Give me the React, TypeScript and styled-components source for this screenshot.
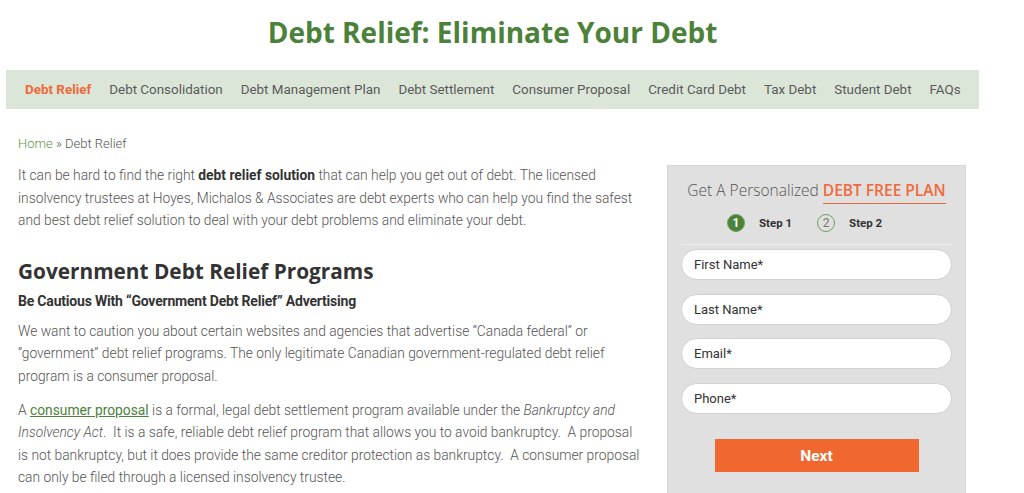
import styled, { createGlobalStyle } from 'styled-components';

const GlobalStyle = createGlobalStyle`
  body {
    margin: 0;
    background: #fff;
    font-family: Roboto, "Liberation Sans", sans-serif;
  }
`;

const navItems = [
  'Debt Relief',
  'Debt Consolidation',
  'Debt Management Plan',
  'Debt Settlement',
  'Consumer Proposal',
  'Credit Card Debt',
  'Tax Debt',
  'Student Debt',
  'FAQs',
];

const fields = ['First Name*', 'Last Name*', 'Email*', 'Phone*'];

const App = () => {
  return (
    <Page>
      <GlobalStyle />
      <Title>Debt Relief: Eliminate Your Debt</Title>
      <Nav>
        {navItems.map((item, i) => (
          <NavItem key={item} $active={i === 0}>{item}</NavItem>
        ))}
      </Nav>
      <Main>
        <Content>
          <Crumbs>
            <a>Home</a> » Debt Relief
          </Crumbs>
          <Para>
            It can be hard to find the right <b>debt relief solution</b> that can help you get out of debt. The licensed
            insolvency trustees at Hoyes, Michalos &amp; Associates are debt experts who can help you find the safest
            and best debt relief solution to deal with your debt problems and eliminate your debt.
          </Para>
          <Heading>Government Debt Relief Programs</Heading>
          <SubHeading>Be Cautious With “Government Debt Relief” Advertising</SubHeading>
          <Para>
            We want to caution you about certain websites and agencies that advertise “Canada federal” or
            “government” debt relief programs. The only legitimate Canadian government-regulated debt relief
            program is a consumer proposal.
          </Para>
          <Para>
            A <TextLink>consumer proposal</TextLink> is a formal, legal debt settlement program available under the{' '}
            <i>Bankruptcy and Insolvency Act</i>.&nbsp; It is a safe, reliable debt relief program that allows you to
            avoid bankruptcy.&nbsp; A proposal is not bankruptcy, but it does provide the same creditor protection as
            bankruptcy.&nbsp; A consumer proposal can only be filed through a licensed insolvency trustee.
          </Para>
        </Content>
        <Sidebar>
          <PlanTitle>
            Get A Personalized <PlanAccent>DEBT FREE PLAN</PlanAccent>
          </PlanTitle>
          <Steps>
            <Step>
              <StepDot $current>1</StepDot>
              Step 1
            </Step>
            <Step>
              <StepDot>2</StepDot>
              Step 2
            </Step>
          </Steps>
          <Form>
            {fields.map((f) => (
              <Field key={f} placeholder={f} />
            ))}
            <NextButton type="button">Next</NextButton>
          </Form>
        </Sidebar>
      </Main>
    </Page>
  );
};

const Page = styled.div`
  width: 973px;
  margin-left: 6px;
`;

const Title = styled.h1`
  margin: 0;
  padding-top: 14px;
  height: 70px;
  box-sizing: border-box;
  text-align: center;
  font-family: "Open Sans", sans-serif;
  font-weight: 700;
  font-size: 28px;
  line-height: 36px;
  color: #4b8139;
`;

const Nav = styled.nav`
  display: flex;
  align-items: center;
  gap: 18px;
  height: 39px;
  padding: 0 19px;
  background: #dce6d8;
`;

const NavItem = styled.span<{ $active?: boolean }>`
  font-size: 13.4px;
  font-weight: ${(p) => (p.$active ? 700 : 400)};
  color: ${(p) => (p.$active ? '#f0693a' : '#5a5a5a')};
  white-space: nowrap;
`;

const Main = styled.div`
  display: flex;
  align-items: flex-start;
  gap: 27px;
  padding: 0 13px 0 12px;
`;

const Content = styled.div`
  flex: 1;
  padding-top: 26px;
`;

const Crumbs = styled.div`
  font-size: 13px;
  font-weight: 300;
  color: #555;
  line-height: 18px;
  margin-bottom: 11px;

  a {
    color: #5f9448;
  }
`;

const Para = styled.p`
  margin: 0 0 11px;
  font-size: 13.8px;
  font-weight: 300;
  line-height: 22.6px;
  color: #555;

  b {
    font-weight: 700;
    color: #333;
  }
`;

const TextLink = styled.a`
  color: #4b8139;
  font-weight: 400;
  text-decoration: underline;
`;

const Heading = styled.h2`
  margin: 24px 0 0;
  font-family: "Open Sans", sans-serif;
  font-weight: 700;
  font-size: 20.8px;
  line-height: 30px;
  color: #333;
`;

const SubHeading = styled.h3`
  margin: 4px 0 8px;
  font-size: 14px;
  font-weight: 700;
  line-height: 22px;
  color: #333;
  letter-spacing: -0.2px;
`;

const Sidebar = styled.aside`
  width: 299px;
  flex-shrink: 0;
  margin-top: 56px;
  height: 340px;
  box-sizing: border-box;
  background: #e0e0e0;
  border: 1px solid #d6d6d6;
  padding: 13px 13px 0;
`;

const PlanTitle = styled.div`
  text-align: center;
  font-family: "Open Sans", sans-serif;
  font-weight: 300;
  font-size: 15.5px;
  line-height: 22px;
  color: #555;
`;

const PlanAccent = styled.span`
  font-weight: 600;
  color: #f0693a;
  border-bottom: 1px solid #f0693a;
  padding-bottom: 2px;
`;

const Steps = styled.div`
  display: flex;
  gap: 25px;
  margin-top: 13px;
  padding: 0 0 12px 46px;
  border-bottom: 1px solid #ebebeb;
`;

const Step = styled.div`
  display: flex;
  align-items: center;
  gap: 14px;
  font-size: 11.5px;
  font-weight: 700;
  color: #333;
`;

const StepDot = styled.span<{ $current?: boolean }>`
  width: 18px;
  height: 18px;
  border-radius: 50%;
  box-sizing: border-box;
  display: flex;
  align-items: center;
  justify-content: center;
  font-size: 12px;
  font-weight: ${(p) => (p.$current ? 700 : 400)};
  background: ${(p) => (p.$current ? '#4b8139' : 'transparent')};
  color: ${(p) => (p.$current ? '#fff' : '#777')};
  border: 1px solid #6fa05a;
`;

const Form = styled.div`
  display: flex;
  flex-direction: column;
  gap: 13.5px;
  margin-top: 4px;
`;

const Field = styled.input`
  height: 31px;
  box-sizing: border-box;
  border: 1px solid #d0d0d0;
  border-radius: 16px;
  background: #fff;
  padding: 0 12px;
  font-family: Roboto, sans-serif;
  font-size: 13px;
  outline: none;

  &::placeholder {
    color: #333;
  }
`;

const NextButton = styled.button`
  align-self: center;
  width: 204px;
  height: 33px;
  margin-top: 12px;
  border: none;
  background: #f06830;
  color: #fff;
  font-family: Roboto, sans-serif;
  font-size: 15.5px;
  font-weight: 700;
  cursor: pointer;
`;

export default App;
